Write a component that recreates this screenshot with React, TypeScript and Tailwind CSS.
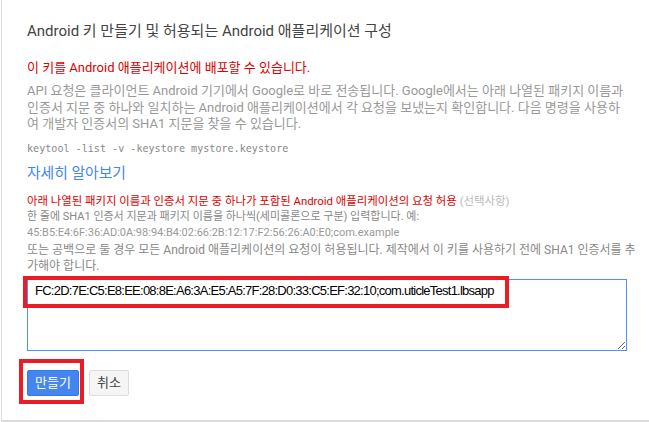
import React from "react";

const sans = "Roboto, 'Noto Sans CJK KR', sans-serif";

export default function App() {
  return (
    <div className="w-[649px] h-[422px] bg-white overflow-hidden" style={{ fontFamily: sans }}>
      <div className="relative ml-[1px] h-[422px] border-l border-b-2 border-[#dcdcdc] pl-[25px] pt-[21px]">
        <div className="text-[15px] leading-[20px] text-[#444] whitespace-nowrap">
          Android 키 만들기 및 허용되는 Android 애플리케이션 구성
        </div>
        <div className="mt-[19px] text-[13px] leading-[16px] text-[#dd0000] whitespace-nowrap">
          이 키를 Android 애플리케이션에 배포할 수 있습니다.
        </div>
        <div className="mt-[7px] text-[13px] leading-[16.5px] text-[#999] whitespace-nowrap">
          <div>API 요청은 클라이언트 Android 기기에서 Google로 바로 전송됩니다. Google에서는 아래 나열된 패키지 이름과</div>
          <div>인증서 지문 중 하나와 일치하는 Android 애플리케이션에서 각 요청을 보냈는지 확인합니다. 다음 명령을 사용하</div>
          <div>여 개발자 인증서의 SHA1 지문을 찾을 수 있습니다.</div>
        </div>
        <div
          className="mt-[8px] text-[10.1px] leading-[16px] text-[#888] whitespace-nowrap"
          style={{ fontFamily: "'DejaVu Sans Mono', monospace" }}
        >
          keytool -list -v -keystore mystore.keystore
        </div>
        <div className="mt-[7px] text-[14.8px] leading-[18px] text-[#4285f4] whitespace-nowrap">자세히 알아보기</div>
        <div className="mt-[11px] leading-[16px] whitespace-nowrap">
          <div className="text-[11.4px] text-[#dd0000]">
            아래 나열된 패키지 이름과 인증서 지문 중 하나가 포함된 Android 애플리케이션의 요청 허용{" "}
            <span className="text-[#bbb]">(선택사항)</span>
          </div>
          <div className="text-[11px] text-[#888]">한 줄에 SHA1 인증서 지문과 패키지 이름을 하나씩(세미콜론으로 구분) 입력합니다. 예:</div>
          <div className="text-[#999] text-[11px]">45:B5:E4:6F:36:AD:0A:98:94:B4:02:66:2B:12:17:F2:56:26:A0:E0;com.example</div>
        </div>
        <div className="mt-[1px] text-[12px] leading-[16px] text-[#888] whitespace-nowrap">
          <div>또는 공백으로 둘 경우 모든 Android 애플리케이션의 요청이 허용됩니다. 제작에서 이 키를 사용하기 전에 SHA1 인증서를 추</div>
          <div>가해야 합니다.</div>
        </div>
        <textarea
          readOnly
          defaultValue="FC:2D:7E:C5:E8:EE:08:8E:A6:3A:E5:A5:7F:28:D0:33:C5:EF:32:10;com.uticleTest1.lbsapp"
          className="mt-[5px] block w-[600px] h-[72px] border border-[#4d90fe] px-[7px] pt-[3px] text-[13px] leading-[16px] tracking-[-0.75px] text-black outline-none"
          style={{ fontFamily: "'Liberation Sans', Arial, sans-serif" }}
        />
        <div className="mt-[19px] flex gap-[10px]">
          <button className="w-[52px] h-[26px] rounded-[2px] border border-[#3079ed] bg-[#4585f0] text-white text-[13px]">
            만들기
          </button>
          <button className="w-[40px] h-[26px] rounded-[2px] border border-[#dcdcdc] bg-[#f5f5f5] text-[#444] text-[13px]">
            취소
          </button>
        </div>
        <div className="absolute left-[21px] top-[276px] w-[486px] h-[32px] border-4 border-[#ec1c24]" />
        <div className="absolute left-[17px] top-[359px] w-[65px] h-[45px] border-4 border-[#ec1c24]" />
      </div>
    </div>
  );
}
